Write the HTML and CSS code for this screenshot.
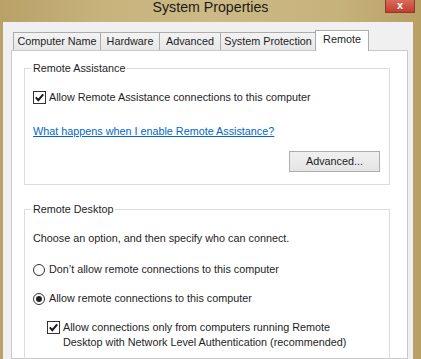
FILE: index.html
```html
<!DOCTYPE html>
<html lang="en">
<head>
<meta charset="utf-8">
<title>System Properties</title>
<link rel="stylesheet" href="styles.css">
</head>
<body>
<div class="window">
  <div class="titlebar">
    <span></span>
    <span class="title">System Properties</span>
    <span class="close">x</span>
  </div>
  <div class="client">
    <div class="tabs">
      <div class="tab tab-name">Computer Name</div>
      <div class="tab tab-hw">Hardware</div>
      <div class="tab tab-adv">Advanced</div>
      <div class="tab tab-sp">System Protection</div>
      <div class="tab tab-remote selected">Remote</div>
    </div>
    <div class="panel">
      <fieldset class="group group-assist">
        <legend>Remote Assistance</legend>
        <div class="group-body">
          <div class="row row-first">
            <span class="checkbox"><svg viewBox="0 0 11 11" width="11" height="11"><path d="M1.8 5.4 L4.3 8.2 L9.2 2.4" fill="none" stroke="#1a1a1a" stroke-width="2"/></svg></span>
            <span>Allow Remote Assistance connections to this computer</span>
          </div>
          <div class="row row-link"><a class="link" href="#">What happens when I enable Remote Assistance?</a></div>
          <div class="actions"><span class="button">Advanced...</span></div>
        </div>
      </fieldset>
      <fieldset class="group group-desktop">
        <legend>Remote Desktop</legend>
        <div class="group-body">
          <div class="row row-first">Choose an option, and then specify who can connect.</div>
          <div class="row row-radio1"><span class="radio"></span><span>Don’t allow remote connections to this computer</span></div>
          <div class="row row-radio2"><span class="radio checked"></span><span>Allow remote connections to this computer</span></div>
          <div class="row row-nla">
            <span class="checkbox"><svg viewBox="0 0 11 11" width="11" height="11"><path d="M1.8 5.4 L4.3 8.2 L9.2 2.4" fill="none" stroke="#1a1a1a" stroke-width="2"/></svg></span>
            <span class="wrap">Allow connections only from computers running Remote<br>Desktop with Network Level Authentication (recommended)</span>
          </div>
        </div>
      </fieldset>
    </div>
  </div>
</div>
</body>
</html>
```
FILE: styles.css
```css
* { box-sizing: border-box; }
html, body { margin: 0; padding: 0; }
body {
  width: 421px;
  height: 359px;
  overflow: hidden;
  background: #c5b07a;
  font-family: "Liberation Sans", Arial, sans-serif;
  font-size: 10.8px;
  color: #1e1e1e;
}
.window {
  display: flex;
  flex-direction: column;
  height: 359px;
  background: linear-gradient(90deg, #b9a167 0%, #c7b37c 25%, #ccb985 50%, #c6b27b 80%, #b8a065 100%);
}
.titlebar {
  height: 22px;
  display: grid;
  grid-template-columns: 1fr auto 1fr;
  align-items: start;
}
.title {
  font-size: 14.2px;
  line-height: 14px;
  color: #1c1a14;
  white-space: nowrap;
}
.close {
  justify-self: end;
  margin-right: 6px;
  width: 30px;
  height: 13px;
  background: linear-gradient(#d86c5c, #c23e2e);
  border: 1px solid #8e3a2e;
  border-top: none;
  color: #fff;
  font-weight: bold;
  font-size: 11px;
  line-height: 10px;
  text-align: center;
}
.client {
  flex: 1;
  display: flex;
  flex-direction: column;
  margin: 0 8px 0 3px;
  padding: 8px 5px 0 8px;
  background: #f0f0f0;
  min-height: 0;
}
.tabs {
  display: flex;
  align-items: flex-end;
  height: 20px;
  margin-left: 2px;
}
.tab {
  height: 18px;
  line-height: 17px;
  text-align: center;
  border: 1px solid #acacac;
  border-bottom: none;
  background: linear-gradient(#f3f3f3, #e7e7e7);
  white-space: nowrap;
}
.tab + .tab { margin-left: -1px; }
.tab-name { width: 88px; }
.tab-hw { width: 60px; }
.tab-adv { width: 62px; }
.tab-sp { width: 96px; }
.tab-remote { width: 54px; }
.tab.selected {
  height: 21px;
  margin-bottom: -1px;
  padding-bottom: 3px;
  background: #fff;
  position: relative;
  z-index: 1;
}
.panel {
  flex: 1;
  border: 1px solid #c9c9c9;
  background: #fff;
  padding: 0 17px 0 12px;
  min-height: 0;
}
.group {
  margin: 0;
  min-width: 0;
  border: 1px solid #dcdcdc;
  padding: 0 9px 12px 8px;
}
.group-assist { margin-top: 11px; }
.group-desktop { margin-top: 18px; }
legend {
  padding: 0 2px;
  margin-left: -2px;
  line-height: 13px;
}
.group-body {
  display: flex;
  flex-direction: column;
}
.row {
  display: flex;
  align-items: center;
  gap: 3px;
  line-height: 13px;
  white-space: nowrap;
}
.row-first { margin-top: 16px; }
.row-link { margin-top: 21px; }
.link { color: #0066cc; text-decoration: underline; }
.actions {
  display: flex;
  justify-content: flex-end;
  margin-top: 13px;
}
.button {
  width: 91px;
  height: 21px;
  line-height: 19px;
  text-align: center;
  border: 1px solid #adadad;
  background: linear-gradient(#f0f0f0, #e5e5e5);
}
.checkbox {
  width: 13px;
  height: 13px;
  flex: none;
  border: 1px solid #333;
  background: #fff;
  display: flex;
  align-items: center;
  justify-content: center;
}
.radio {
  width: 12px;
  height: 12px;
  flex: none;
  border: 1px solid #333;
  border-radius: 50%;
  background: #fff;
  margin-right: 1px;
  display: flex;
  align-items: center;
  justify-content: center;
}
.radio.checked::after {
  content: "";
  width: 6px;
  height: 6px;
  border-radius: 50%;
  background: #222;
}
.row-radio1 { margin-top: 18px; }
.row-radio2 { margin-top: 16px; }
.row-nla {
  margin-top: 15px;
  margin-left: 14px;
  align-items: flex-start;
  line-height: 15px;
}
.row-nla .checkbox { margin-top: 1px; }
```
